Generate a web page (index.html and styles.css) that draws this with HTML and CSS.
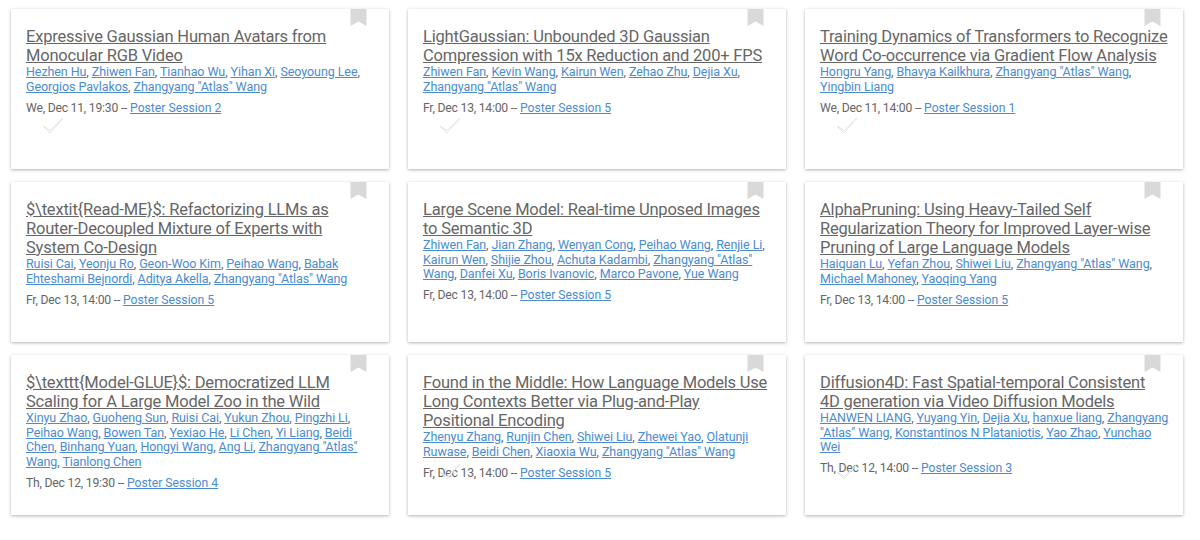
FILE: index.html
```html
<!DOCTYPE html>
<html>
<head>
    <title>Papers</title>
    <link rel="stylesheet" href="styles.css">
</head>
<body>
    <div class="grid">
        <div class="card">
            <svg class="bookmark" viewBox="0 0 16 17"><path d="M0 0H16V17L8 12.5L0 17Z"/></svg>
            <svg class="check" viewBox="0 0 22 18"><path d="M1 9L8 16L21 1L8 13.5Z"/></svg>
            <a class="title" href="#">Expressive Gaussian Human Avatars from Monocular RGB Video</a>
            <div class="authors"><a href="#">Hezhen Hu</a>, <a href="#">Zhiwen Fan</a>, <a href="#">Tianhao Wu</a>, <a href="#">Yihan Xi</a>, <a href="#">Seoyoung Lee</a>, <a href="#">Georgios Pavlakos</a>, <a href="#">Zhangyang "Atlas" Wang</a></div>
            <div class="session">We, Dec 11, 19:30 -- <a href="#">Poster Session 2</a></div>
        </div>
        <div class="card">
            <svg class="bookmark" viewBox="0 0 16 17"><path d="M0 0H16V17L8 12.5L0 17Z"/></svg>
            <svg class="check" viewBox="0 0 22 18"><path d="M1 9L8 16L21 1L8 13.5Z"/></svg>
            <a class="title" href="#">LightGaussian: Unbounded 3D Gaussian Compression with 15x Reduction and 200+ FPS</a>
            <div class="authors"><a href="#">Zhiwen Fan</a>, <a href="#">Kevin Wang</a>, <a href="#">Kairun Wen</a>, <a href="#">Zehao Zhu</a>, <a href="#">Dejia Xu</a>, <a href="#">Zhangyang "Atlas" Wang</a></div>
            <div class="session">Fr, Dec 13, 14:00 -- <a href="#">Poster Session 5</a></div>
        </div>
        <div class="card">
            <svg class="bookmark" viewBox="0 0 16 17"><path d="M0 0H16V17L8 12.5L0 17Z"/></svg>
            <svg class="check" viewBox="0 0 22 18"><path d="M1 9L8 16L21 1L8 13.5Z"/></svg>
            <a class="title" href="#">Training Dynamics of Transformers to Recognize Word Co-occurrence via Gradient Flow Analysis</a>
            <div class="authors"><a href="#">Hongru Yang</a>, <a href="#">Bhavya Kailkhura</a>, <a href="#">Zhangyang "Atlas" Wang</a>, <a href="#">Yingbin Liang</a></div>
            <div class="session">We, Dec 11, 14:00 -- <a href="#">Poster Session 1</a></div>
        </div>
        <div class="card">
            <svg class="bookmark" viewBox="0 0 16 17"><path d="M0 0H16V17L8 12.5L0 17Z"/></svg>
            <a class="title" href="#">$\textit{Read-ME}$: Refactorizing LLMs as Router-Decoupled Mixture of Experts with System Co-Design</a>
            <div class="authors"><a href="#">Ruisi Cai</a>, <a href="#">Yeonju Ro</a>, <a href="#">Geon-Woo Kim</a>, <a href="#">Peihao Wang</a>, <a href="#">Babak Ehteshami Bejnordi</a>, <a href="#">Aditya Akella</a>, <a href="#">Zhangyang "Atlas" Wang</a></div>
            <div class="session">Fr, Dec 13, 14:00 -- <a href="#">Poster Session 5</a></div>
        </div>
        <div class="card">
            <svg class="bookmark" viewBox="0 0 16 17"><path d="M0 0H16V17L8 12.5L0 17Z"/></svg>
            <a class="title" href="#">Large Scene Model: Real-time Unposed Images to Semantic 3D</a>
            <div class="authors"><a href="#">Zhiwen Fan</a>, <a href="#">Jian Zhang</a>, <a href="#">Wenyan Cong</a>, <a href="#">Peihao Wang</a>, <a href="#">Renjie Li</a>, <a href="#">Kairun Wen</a>, <a href="#">Shijie Zhou</a>, <a href="#">Achuta Kadambi</a>, <a href="#">Zhangyang "Atlas" Wang</a>, <a href="#">Danfei Xu</a>, <a href="#">Boris Ivanovic</a>, <a href="#">Marco Pavone</a>, <a href="#">Yue Wang</a></div>
            <div class="session">Fr, Dec 13, 14:00 -- <a href="#">Poster Session 5</a></div>
        </div>
        <div class="card">
            <svg class="bookmark" viewBox="0 0 16 17"><path d="M0 0H16V17L8 12.5L0 17Z"/></svg>
            <a class="title" href="#">AlphaPruning: Using Heavy-Tailed Self Regularization Theory for Improved Layer-wise Pruning of Large Language Models</a>
            <div class="authors"><a href="#">Haiquan Lu</a>, <a href="#">Yefan Zhou</a>, <a href="#">Shiwei Liu</a>, <a href="#">Zhangyang "Atlas" Wang</a>, <a href="#">Michael Mahoney</a>, <a href="#">Yaoqing Yang</a></div>
            <div class="session">Fr, Dec 13, 14:00 -- <a href="#">Poster Session 5</a></div>
        </div>
        <div class="card">
            <svg class="bookmark" viewBox="0 0 16 17"><path d="M0 0H16V17L8 12.5L0 17Z"/></svg>
            <a class="title" href="#">$\texttt{Model-GLUE}$: Democratized LLM Scaling for A Large Model Zoo in the Wild</a>
            <div class="authors"><a href="#">Xinyu Zhao</a>, <a href="#">Guoheng Sun</a>, <a href="#">Ruisi Cai</a>, <a href="#">Yukun Zhou</a>, <a href="#">Pingzhi Li</a>, <a href="#">Peihao Wang</a>, <a href="#">Bowen Tan</a>, <a href="#">Yexiao He</a>, <a href="#">Li Chen</a>, <a href="#">Yi Liang</a>, <a href="#">Beidi Chen</a>, <a href="#">Binhang Yuan</a>, <a href="#">Hongyi Wang</a>, <a href="#">Ang Li</a>, <a href="#">Zhangyang "Atlas" Wang</a>, <a href="#">Tianlong Chen</a></div>
            <div class="session">Th, Dec 12, 19:30 -- <a href="#">Poster Session 4</a></div>
        </div>
        <div class="card">
            <svg class="bookmark" viewBox="0 0 16 17"><path d="M0 0H16V17L8 12.5L0 17Z"/></svg>
            <svg class="check" viewBox="0 0 22 18"><path d="M1 9L8 16L21 1L8 13.5Z"/></svg>
            <a class="title" href="#">Found in the Middle: How Language Models Use Long Contexts Better via Plug-and-Play Positional Encoding</a>
            <div class="authors"><a href="#">Zhenyu Zhang</a>, <a href="#">Runjin Chen</a>, <a href="#">Shiwei Liu</a>, <a href="#">Zhewei Yao</a>, <a href="#">Olatunji Ruwase</a>, <a href="#">Beidi Chen</a>, <a href="#">Xiaoxia Wu</a>, <a href="#">Zhangyang "Atlas" Wang</a></div>
            <div class="session">Fr, Dec 13, 14:00 -- <a href="#">Poster Session 5</a></div>
        </div>
        <div class="card">
            <svg class="bookmark" viewBox="0 0 16 17"><path d="M0 0H16V17L8 12.5L0 17Z"/></svg>
            <svg class="check" viewBox="0 0 22 18"><path d="M1 9L8 16L21 1L8 13.5Z"/></svg>
            <a class="title" href="#">Diffusion4D: Fast Spatial-temporal Consistent 4D&nbsp;generation via Video Diffusion Models</a>
            <div class="authors"><a href="#">HANWEN LIANG</a>, <a href="#">Yuyang Yin</a>, <a href="#">Dejia Xu</a>, <a href="#">hanxue liang</a>, <a href="#">Zhangyang "Atlas" Wang</a>, <a href="#">Konstantinos N Plataniotis</a>, <a href="#">Yao Zhao</a>, <a href="#">Yunchao Wei</a></div>
            <div class="session">Th, Dec 12, 14:00 -- <a href="#">Poster Session 3</a></div>
        </div>
    </div>
</body>
</html>
```

FILE: styles.css
```css
body { margin: 0; min-height: 540px; background: #fff; font-family: Roboto, Arial, sans-serif; color: #555; }
a { color: #4b8bd0; }
.grid {
    display: grid;
    grid-template-columns: repeat(3, 378px);
    grid-auto-rows: 160px;
    column-gap: 19px;
    row-gap: 13px;
    padding: 9px 0 0 11px;
}
.card {
    position: relative;
    padding: 18px 14px 0 15px;
    background: #fff;
    box-shadow: 0 1px 3px rgba(0,0,0,0.3);
}
.title {
    display: block;
    font-size: 16.5px;
    letter-spacing: -0.2px;
    line-height: 19px;
    color: #666;
}
.authors {
    font-size: 12.5px;
    letter-spacing: -0.08px;
    line-height: 14.5px;
    color: #666;
}
.session {
    margin-top: 6.5px;
    font-size: 12.2px;
    letter-spacing: -0.22px;
    line-height: 15px;
    color: #666;
}
.session a { letter-spacing: 0; }
.bookmark {
    position: absolute;
    top: 0;
    right: 22px;
    width: 17px;
    height: 17px;
    fill: #d9d9d9;
}
.check {
    position: absolute;
    top: 108px;
    left: 31px;
    width: 22px;
    height: 18px;
    fill: #fff;
    stroke: #dcdcdc;
    stroke-width: 0.8;
}
```
